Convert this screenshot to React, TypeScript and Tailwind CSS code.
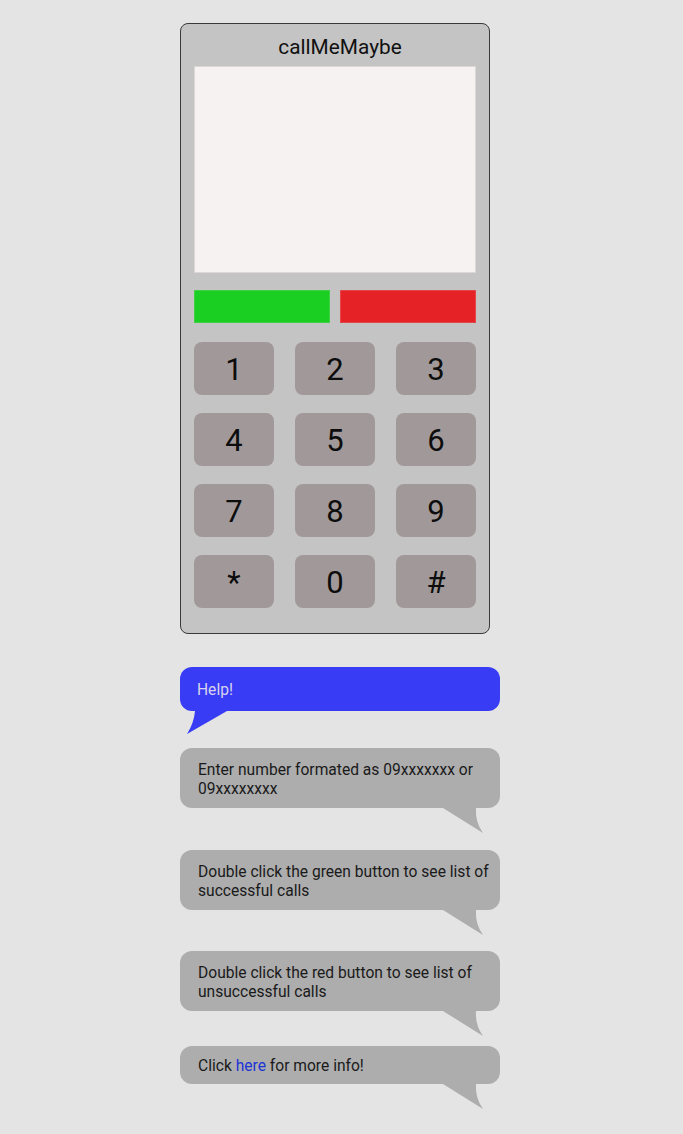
// App.tsx — callMeMaybe dialer + help bubbles

const KEYS = ["1", "2", "3", "4", "5", "6", "7", "8", "9", "*", "0", "#"];

// ─── Speech bubble tails ─────────────────────────────────────────────────────

function TailLeft({ color }: { color: string }) {
  return (
    <svg
      className="absolute left-[6px] top-full"
      width="42"
      height="24"
      viewBox="0 0 42 24"
      aria-hidden="true"
    >
      <path d="M41 0 L1 23 Q8 12 9 0 Z" fill={color} />
    </svg>
  );
}

function TailRight({ color }: { color: string }) {
  return (
    <svg
      className="absolute right-[16px] top-full"
      width="42"
      height="26"
      viewBox="0 0 42 26"
      aria-hidden="true"
    >
      <path d="M1 0 L41 25 Q33 14 34 0 Z" fill={color} />
    </svg>
  );
}

// ─── Component ───────────────────────────────────────────────────────────────

export default function App() {
  return (
    <div
      className="min-h-[1134px] w-full bg-[#e4e4e4] text-[#1a1a1a]"
      style={{ fontFamily: "Roboto, 'Noto Sans', sans-serif" }}
    >
      <div className="ml-[180px] w-[320px] pt-[23px]">
        {/* Phone body */}
        <div className="w-[310px] rounded-[8px] border border-[#3a3a3a] bg-[#c4c4c4] px-[13px] pb-[25px]">
          <h1 className="pt-[11px] pb-[7px] pl-[10px] text-center text-[20.8px] leading-[24px] font-normal text-[#111]">
            callMeMaybe
          </h1>

          {/* Screen */}
          <div className="h-[207px] w-full border border-[#dcd6d6] bg-[#f7f2f2]" />

          {/* Call / hang up */}
          <div className="mt-[17px] flex gap-[10px]">
            <button className="h-[33px] flex-1 border border-[#3fd046] bg-[#1bcf22]" />
            <button className="h-[33px] flex-1 border border-[#e4474a] bg-[#e52226]" />
          </div>

          {/* Keypad */}
          <div className="mt-[19px] grid grid-cols-3 gap-x-[21px] gap-y-[18px]">
            {KEYS.map((k) => (
              <button
                key={k}
                className="flex h-[53px] items-center justify-center rounded-[8px] bg-[#a19999] pt-[2px] text-[31px] leading-none text-[#0d0d0d]"
              >
                {k}
              </button>
            ))}
          </div>
        </div>

        {/* Help bubbles */}
        <div className="mt-[33px] flex flex-col text-[15.6px] leading-[19px]">
          <div className="relative mb-[37px] rounded-[12px] bg-[#383cf5] pt-[14px] pb-[11px] pl-[17px] pr-[6px] text-[#d9d3ee]">
            Help!
            <TailLeft color="#383cf5" />
          </div>

          <div className="relative mb-[42px] rounded-[12px] bg-[#adadad] pt-[13px] pb-[9px] pl-[18px] pr-[6px]">
            Enter number formated as 09xxxxxxx or 09xxxxxxxx
            <TailRight color="#adadad" />
          </div>

          <div className="relative mb-[41px] rounded-[12px] bg-[#adadad] pt-[13px] pb-[9px] pl-[18px] pr-[6px]">
            Double click the green button to see list of successful calls
            <TailRight color="#adadad" />
          </div>

          <div className="relative mb-[35px] rounded-[12px] bg-[#adadad] pt-[13px] pb-[9px] pl-[18px] pr-[6px]">
            Double click the red button to see list of unsuccessful calls
            <TailRight color="#adadad" />
          </div>

          <div className="relative rounded-[12px] bg-[#adadad] pt-[11px] pb-[8px] pl-[18px] pr-[6px]">
            Click <a className="text-[#1d33d6]">here</a> for more info!
            <TailRight color="#adadad" />
          </div>
        </div>
      </div>
    </div>
  );
}
